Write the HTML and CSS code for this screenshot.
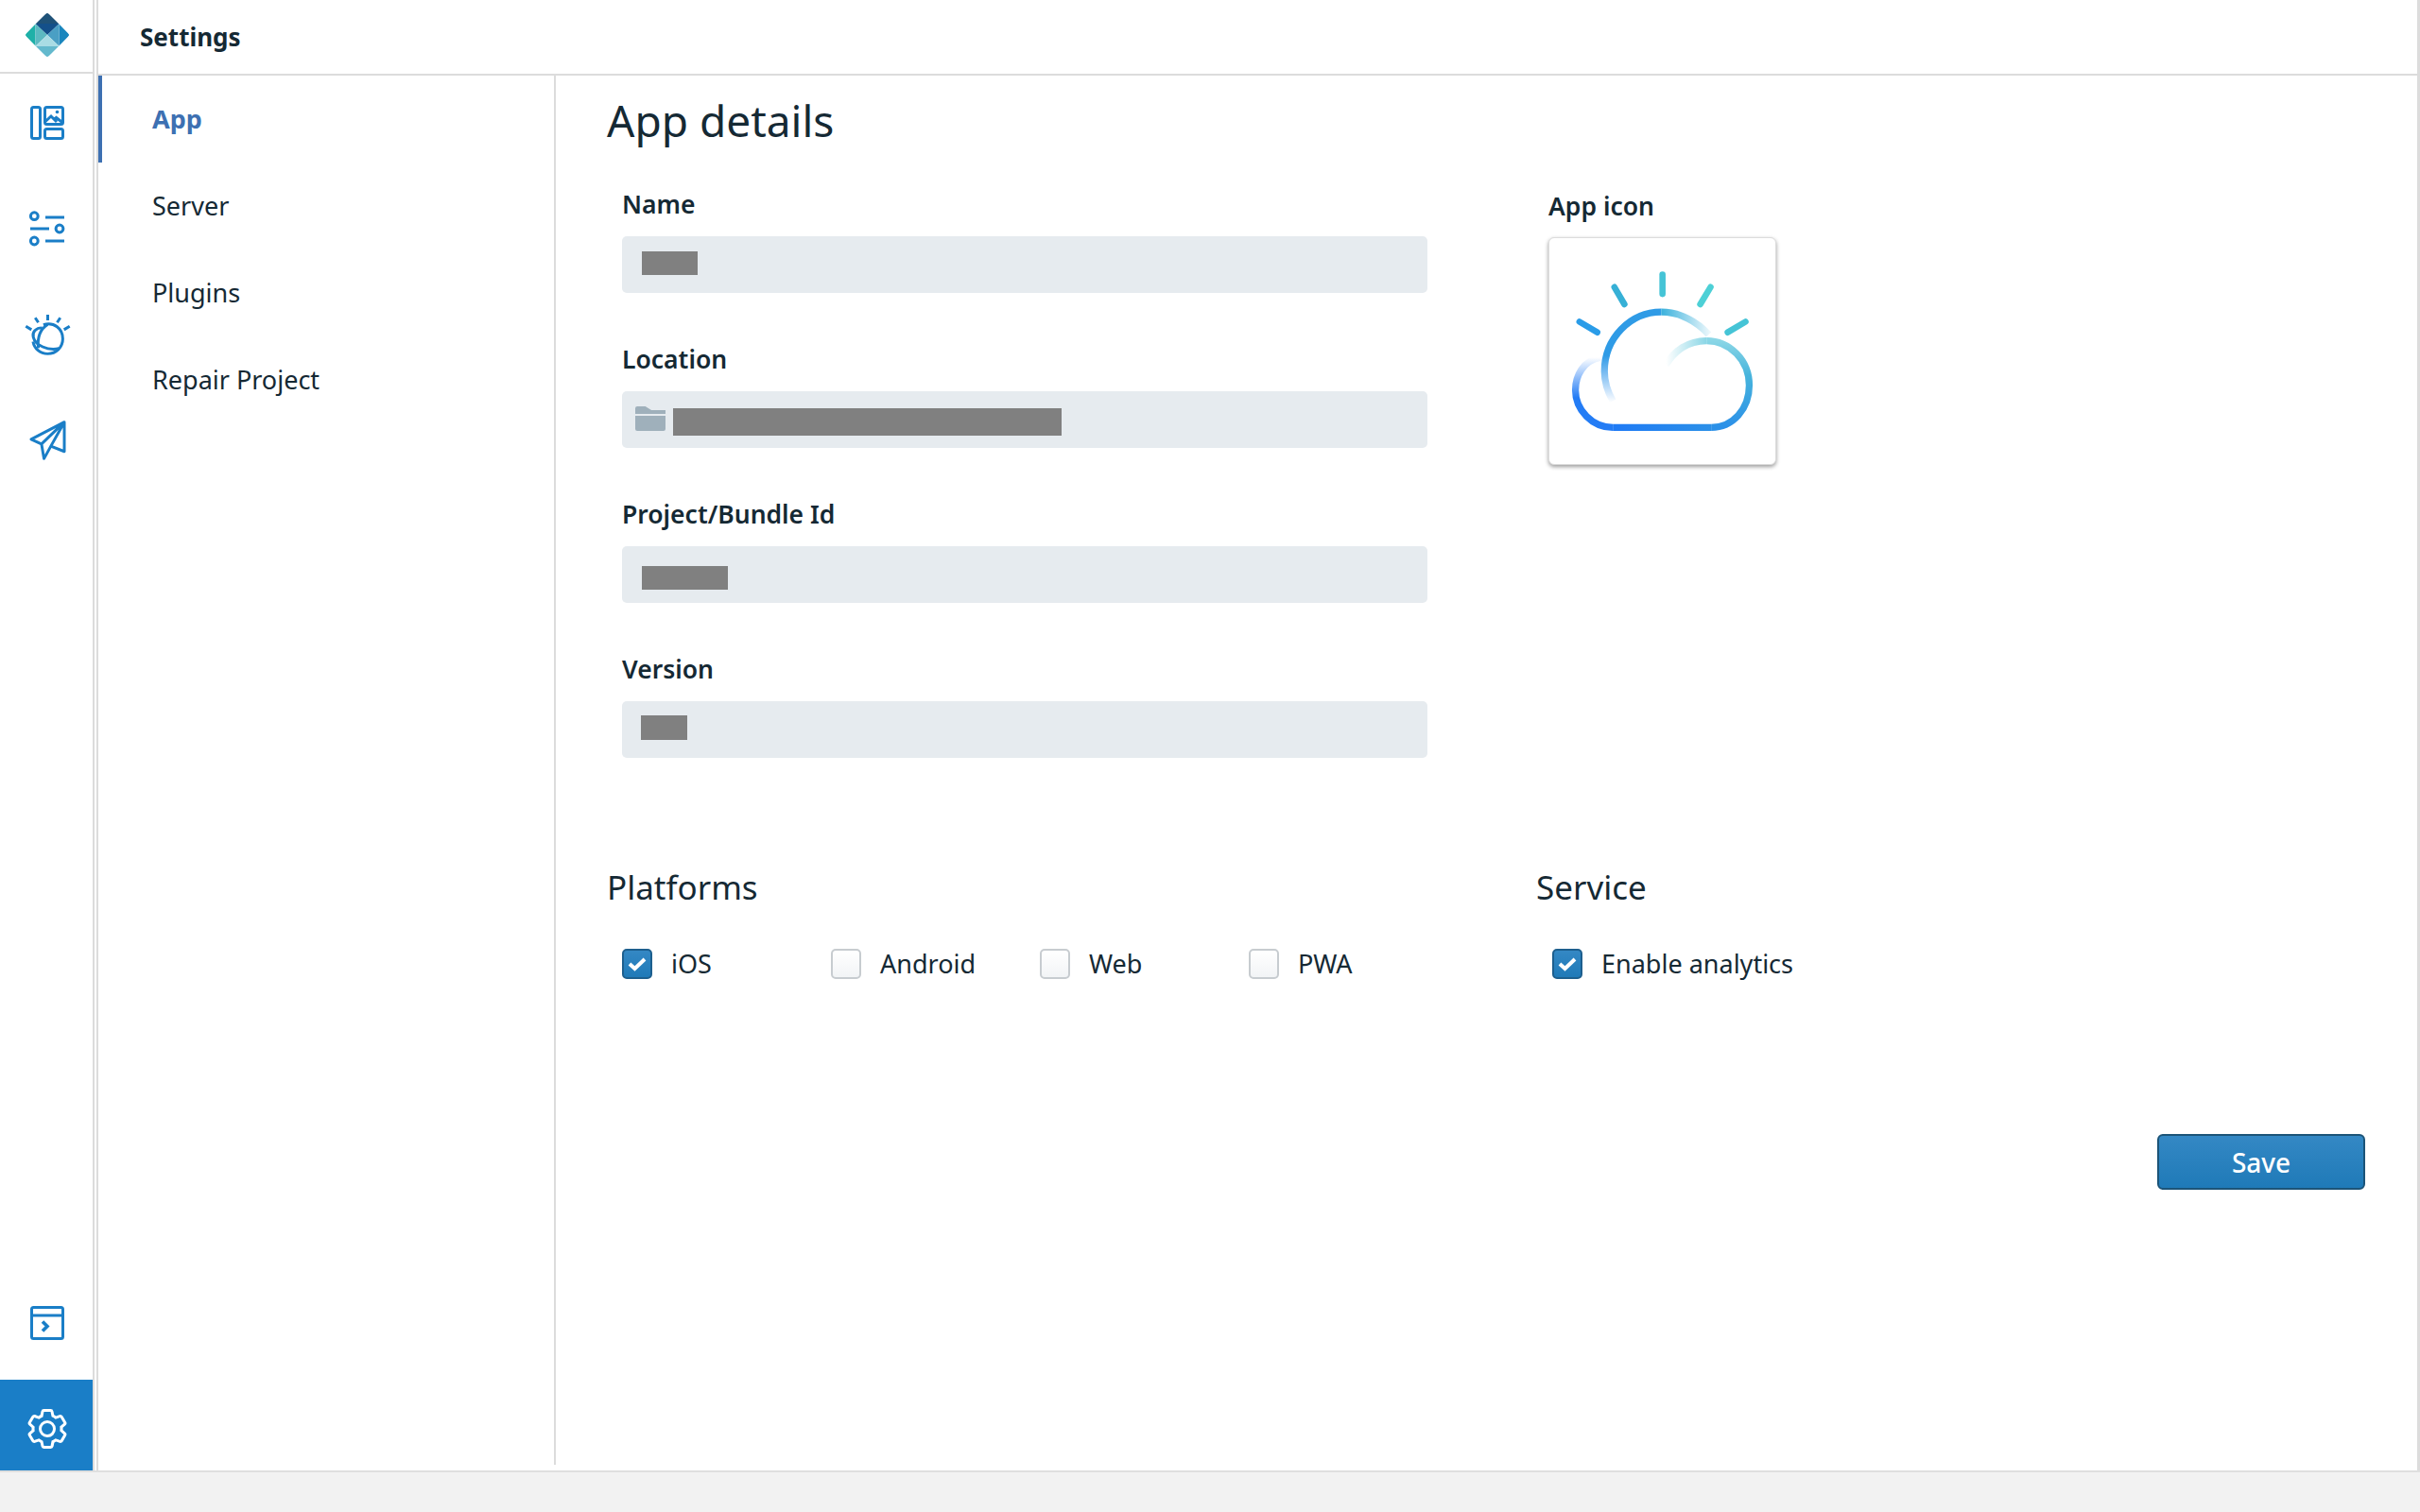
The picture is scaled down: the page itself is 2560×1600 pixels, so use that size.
FILE: index.html
```html
<!DOCTYPE html>
<html lang="en">
<head>
    <meta charset="UTF-8">
    <meta name="viewport" content="width=device-width, initial-scale=1.0">
    <title>Settings</title>
    <link rel="stylesheet" href="styles.css">
</head>
<body>
    <div class="app">
        <!-- Icon rail -->
        <nav class="rail">
            <div class="rail-logo">
                <svg class="logo" viewBox="0 0 48 48" width="48" height="48">
                    <defs>
                        <clipPath id="logoClip"><rect x="7" y="7" width="34" height="34" rx="3" transform="rotate(45 24 24)" /></clipPath>
                    </defs>
                    <g clip-path="url(#logoClip)">
                        <path d="M24 0L36.7 12H11.3z" fill="#1f5278" />
                        <path d="M11.3 12H36.7L24 24z" fill="#14508a" />
                        <path d="M11.3 12L0 24L11.3 36z" fill="#1fb0a8" />
                        <path d="M11.3 12L24 24L11.3 36z" fill="#5cb9c1" />
                        <path d="M36.7 12L48 24L36.7 36z" fill="#1a86bd" />
                        <path d="M36.7 12L24 24L36.7 36z" fill="#4a9fc4" />
                        <path d="M11.3 36H36.7L24 24z" fill="#a9dce4" />
                        <path d="M11.3 36H36.7L24 48z" fill="#64b9cd" />
                    </g>
                </svg>
            </div>
            <div class="rail-group">
                <a class="rail-item">
                    <svg class="icon" viewBox="0 0 40 40" width="40" height="40">
                        <rect x="3.5" y="3.5" width="9" height="33" rx="2" />
                        <rect x="17.5" y="3.5" width="19" height="18" rx="2" />
                        <rect x="17.5" y="26.5" width="19" height="10" rx="2" />
                        <path d="M17.5 19L24 13L30 19M27 16.5L29.5 14.5L36.5 20" />
                        <circle class="solid" cx="30.5" cy="8.5" r="1.8" />
                    </svg>
                </a>
                <a class="rail-item">
                    <svg class="icon" viewBox="0 0 40 40" width="40" height="40">
                        <circle cx="6.3" cy="6.7" r="3.9" />
                        <path d="M18 8H38M2 20H22" />
                        <circle cx="33" cy="20" r="3.9" />
                        <circle cx="6.3" cy="33" r="3.9" />
                        <path d="M18 33H38" />
                    </svg>
                </a>
                <a class="rail-item">
                    <svg class="icon" viewBox="70 83 160 160" width="53" height="53">
                        <path class="thick" d="M150 98V116M110 108L120 123M190 108L180 123M80 135L98 146M220 135L202 146" />
                        <path class="thick" d="M136 130C170 120 198 142 198 175C198 203 176 223 150 223C125 223 107 206 103 184" />
                        <path class="thick" d="M150 129C128 143 116 168 120 205M132 140C112 140 100 154 104 170C110 195 150 215 186 206" />
                    </svg>
                </a>
                <a class="rail-item">
                    <svg class="icon" viewBox="85 428 130 140" width="43" height="47">
                        <path class="thick" d="M203 438L97 493L130 508L138 555L160 515L203 532zM130 508L203 438M160 515L203 438" />
                    </svg>
                </a>
            </div>
            <div class="rail-group rail-bottom">
                <a class="rail-item">
                    <svg class="icon" viewBox="0 0 40 40" width="40" height="40">
                        <rect x="3.5" y="3.5" width="33" height="33" rx="2" />
                        <path d="M3.5 12H36.5" />
                        <path class="chevron" d="M15 18.5L20 23.5L15 28.5" />
                    </svg>
                </a>
                <a class="rail-item active">
                    <svg viewBox="0 0 32 32" width="48" height="48" fill="#fff">
                        <path d="M27 16.76v-1.53l1.92-1.68A2 2 0 0 0 29.3 11l-2.36-4a2 2 0 0 0-1.73-1 2 2 0 0 0-.64.1l-2.43.82a11.35 11.35 0 0 0-1.31-.75l-.51-2.52a2 2 0 0 0-2-1.61h-4.68a2 2 0 0 0-2 1.61l-.51 2.52a11.48 11.48 0 0 0-1.32.75l-2.38-.86A2 2 0 0 0 6.79 6a2 2 0 0 0-1.73 1L2.7 11a2 2 0 0 0 .41 2.51L5 15.24v1.53l-1.89 1.68A2 2 0 0 0 2.7 21l2.36 4a2 2 0 0 0 1.73 1 2 2 0 0 0 .64-.1l2.43-.82a11.35 11.35 0 0 0 1.31.75l.51 2.52a2 2 0 0 0 2 1.61h4.72a2 2 0 0 0 2-1.61l.51-2.52a11.48 11.48 0 0 0 1.32-.75l2.42.82a2 2 0 0 0 .64.1 2 2 0 0 0 1.73-1l2.28-4a2 2 0 0 0-.41-2.51zM25.21 24l-3.43-1.16a8.86 8.86 0 0 1-2.71 1.57L18.36 28h-4.72l-.71-3.55a9.36 9.36 0 0 1-2.7-1.57L6.79 24l-2.36-4 2.72-2.4a8.9 8.9 0 0 1 0-3.13L4.43 12l2.36-4 3.43 1.16a8.86 8.86 0 0 1 2.71-1.57L13.64 4h4.72l.71 3.55a9.36 9.36 0 0 1 2.7 1.57L25.21 8l2.36 4-2.72 2.4a8.9 8.9 0 0 1 0 3.13L27.57 20z" />
                        <path d="M16 22a6 6 0 1 1 6-6 5.94 5.94 0 0 1-6 6zm0-10a3.91 3.91 0 0 0-4 4 3.91 3.91 0 0 0 4 4 3.91 3.91 0 0 0 4-4 3.91 3.91 0 0 0-4-4z" />
                    </svg>
                </a>
            </div>
        </nav>

        <div class="panel">
            <header class="topbar">Settings</header>
            <div class="panel-body">
                <!-- Section list -->
                <ul class="sidenav">
                    <li class="sidenav-item selected">App</li>
                    <li class="sidenav-item">Server</li>
                    <li class="sidenav-item">Plugins</li>
                    <li class="sidenav-item">Repair Project</li>
                </ul>

                <main class="main">
                    <h1 class="page-title">App details</h1>
                    <div class="details">
                        <div class="fields">
                            <div class="field">
                                <label class="field-label">Name</label>
                                <div class="field-input"><span class="mask mask-name"></span></div>
                            </div>
                            <div class="field">
                                <label class="field-label">Location</label>
                                <div class="field-input has-icon">
                                    <svg class="folder" viewBox="0 0 30 26" width="32" height="26" preserveAspectRatio="none">
                                        <path d="M0 2a2 2 0 0 1 2-2h8l6 4h14v4H0zM0 10h30v14a2 2 0 0 1-2 2H2a2 2 0 0 1-2-2z" fill="#9fb0bb" />
                                    </svg>
                                    <span class="mask mask-location"></span>
                                </div>
                            </div>
                            <div class="field">
                                <label class="field-label">Project/Bundle Id</label>
                                <div class="field-input"><span class="mask mask-project"></span></div>
                            </div>
                            <div class="field">
                                <label class="field-label">Version</label>
                                <div class="field-input"><span class="mask mask-version"></span></div>
                            </div>
                        </div>
                        <div class="app-icon">
                            <div class="field-label">App icon</div>
                            <div class="icon-card">
                                <svg viewBox="52 183 723 724" width="239" height="239" fill="none" stroke-width="22" stroke-linecap="butt">
                                    <defs>
                                        <linearGradient id="cloudLeft" gradientUnits="userSpaceOnUse" x1="0" y1="565" x2="0" y2="750">
                                            <stop offset="0" stop-color="#237cf5" stop-opacity="0" />
                                            <stop offset="0.7" stop-color="#237cf5" />
                                        </linearGradient>
                                        <linearGradient id="cloudBottom" gradientUnits="userSpaceOnUse" x1="255" y1="0" x2="570" y2="0">
                                            <stop offset="0" stop-color="#1f7af5" />
                                            <stop offset="1" stop-color="#2b90e8" />
                                        </linearGradient>
                                        <linearGradient id="cloudRight" gradientUnits="userSpaceOnUse" x1="0" y1="790" x2="0" y2="512">
                                            <stop offset="0" stop-color="#2b90e8" />
                                            <stop offset="0.6" stop-color="#47b4dc" />
                                            <stop offset="1" stop-color="#8ad6e6" />
                                        </linearGradient>
                                        <linearGradient id="cloudInner" gradientUnits="userSpaceOnUse" x1="555" y1="0" x2="425" y2="0">
                                            <stop offset="0" stop-color="#8ad6e6" />
                                            <stop offset="1" stop-color="#8ad6e6" stop-opacity="0" />
                                        </linearGradient>
                                        <linearGradient id="bigLeft" gradientUnits="userSpaceOnUse" x1="0" y1="710" x2="0" y2="560">
                                            <stop offset="0" stop-color="#2f8ff0" stop-opacity="0" />
                                            <stop offset="1" stop-color="#2f9be6" />
                                        </linearGradient>
                                        <linearGradient id="bigTop" gradientUnits="userSpaceOnUse" x1="410" y1="0" x2="565" y2="0">
                                            <stop offset="0" stop-color="#3ab1dc" />
                                            <stop offset="1" stop-color="#3ab1dc" stop-opacity="0.1" />
                                        </linearGradient>
                                    </defs>
                                    <path d="M215 565C160 575 135 625 135 670C135 735 190 790 255 790" stroke="url(#cloudLeft)" />
                                    <path d="M255 790H570" stroke="url(#cloudBottom)" />
                                    <path d="M570 790C640 790 692 730 692 655C692 575 630 512 555 512" stroke="url(#cloudRight)" />
                                    <path d="M555 512C495 512 450 545 425 590" stroke="url(#cloudInner)" />
                                    <path d="M255 705C235 670 228 640 228 610C228 505 310 420 410 420" stroke="url(#bigLeft)" />
                                    <path d="M410 420C470 420 525 450 562 492" stroke="url(#bigTop)" />
                                    <g stroke-width="20" stroke-linecap="round">
                                        <path d="M414 300V362" stroke="#45c4d6" />
                                        <path d="M260 340L292 395" stroke="#36b0d6" />
                                        <path d="M568 340L535 395" stroke="#4dd0d6" />
                                        <path d="M148 451L205 485" stroke="#2a9ce8" />
                                        <path d="M680 451L623 485" stroke="#45c4d6" />
                                    </g>
                                </svg>
                            </div>
                        </div>
                    </div>

                    <div class="options">
                        <section class="option-group platforms">
                            <h2 class="group-title">Platforms</h2>
                            <div class="check-row">
                                <label class="check"><span class="box checked"><svg viewBox="0 0 20 16" width="20" height="16"><path d="M2 8L7.5 13L18 3" /></svg></span>iOS</label>
                                <label class="check"><span class="box"></span>Android</label>
                                <label class="check"><span class="box"></span>Web</label>
                                <label class="check"><span class="box"></span>PWA</label>
                            </div>
                        </section>
                        <section class="option-group">
                            <h2 class="group-title">Service</h2>
                            <div class="check-row single">
                                <label class="check"><span class="box checked"><svg viewBox="0 0 20 16" width="20" height="16"><path d="M2 8L7.5 13L18 3" /></svg></span>Enable analytics</label>
                            </div>
                        </section>
                    </div>

                    <div class="actions">
                        <button class="save-btn">Save</button>
                    </div>
                </main>
            </div>
        </div>
    </div>
</body>
</html>
```

FILE: styles.css
```css
* {
    box-sizing: border-box;
}
body {
    margin: 0;
    background-color: #f2f2f2;
    color: #152934;
    font-family: "Noto Sans", "Open Sans", sans-serif;
    font-size: 27px;
}
.app {
    display: flex;
    height: 1558px;
    background-color: #fff;
    border-bottom: 2px solid #dfdfdf;
}

/* Icon rail */
.rail {
    flex: none;
    display: flex;
    flex-direction: column;
    width: 100px;
    border-right: 2px solid #dcdcdc;
}
.rail-logo {
    display: flex;
    align-items: center;
    justify-content: center;
    height: 78px;
    padding: 0 0 2px 2px;
    border-bottom: 2px solid #dcdcdc;
}
.rail-group {
    display: flex;
    flex-direction: column;
    gap: 8px;
}
.rail-bottom {
    margin-top: auto;
}
.rail-item {
    display: flex;
    align-items: center;
    justify-content: center;
    height: 104px;
    padding-left: 2px;
}
.rail-item.active {
    height: 96px;
    padding-top: 8px;
    background-color: #1a7ec7;
}
.icon {
    fill: none;
    stroke: #1a7ec7;
    stroke-width: 3;
}
.icon .solid {
    fill: #1a7ec7;
    stroke: none;
}
.icon .thick {
    stroke-width: 9;
    stroke-linejoin: round;
}
.icon .chevron {
    stroke-width: 3.6;
}

.panel {
    flex: 1;
    min-width: 0;
    display: flex;
    flex-direction: column;
    margin-left: 2px;
    border-left: 2px solid #dcdcdc;
    border-right: 3px solid #dcdcdc;
}
.topbar {
    display: flex;
    align-items: center;
    height: 80px;
    padding-left: 44px;
    border-bottom: 2px solid #dcdcdc;
    font-weight: 700;
    font-size: 26px;
}
.panel-body {
    flex: 1;
    display: flex;
}

/* Section list */
.sidenav {
    flex: none;
    width: 484px;
    height: 1470px;
    margin: 0;
    padding: 0;
    list-style: none;
    border-right: 2px solid #dcdcdc;
}
.sidenav-item {
    display: flex;
    align-items: center;
    height: 92px;
    padding: 0 0 2px 57px;
}
.sidenav-item.selected {
    padding-left: 53px;
    border-left: 4px solid #3d70b2;
    color: #3d70b2;
    font-weight: 700;
}

.main {
    flex: 1;
    min-width: 0;
    padding: 15px 55px 0 54px;
}
.page-title {
    margin: 0 0 39px;
    font-size: 46px;
    font-weight: 400;
    line-height: 64px;
}
.details {
    display: flex;
}
.fields {
    width: 852px;
    margin-left: 16px;
}
.field {
    margin-bottom: 52px;
}
.field-label {
    display: block;
    margin-bottom: 16px;
    font-size: 26.5px;
    font-weight: 600;
    line-height: 36px;
}
.field-input {
    display: flex;
    align-items: center;
    height: 60px;
    padding-left: 20px;
    background-color: #e6ebef;
    border-radius: 5px;
}
.field-input.has-icon {
    padding-left: 14px;
    gap: 8px;
}
.folder {
    margin-top: -2px;
}
.mask {
    background-color: #808080;
}
.mask-name {
    width: 59px;
    height: 25px;
    margin: -3px 0 0 1px;
}
.mask-location {
    width: 411px;
    height: 29px;
    margin-top: 5px;
}
.mask-project {
    width: 91px;
    height: 25px;
    margin: 7px 0 0 1px;
}
.mask-version {
    width: 49px;
    height: 26px;
    margin-top: -4px;
}
.app-icon {
    margin-left: 128px;
}
.app-icon .field-label {
    margin-bottom: 15px;
    padding-top: 2px;
    height: 38px;
}
.icon-card {
    width: 241px;
    height: 241px;
    border: 1px solid #dcdcdc;
    border-radius: 6px;
    background-color: #fff;
    box-shadow: 0 2px 4px rgba(0, 0, 0, 0.4);
}

/* Platforms and service */
.options {
    display: flex;
    margin-top: 63px;
}
.option-group {
    flex: none;
}
.platforms {
    width: 983px;
}
.group-title {
    margin: 0 0 43px;
    font-size: 35px;
    font-weight: 400;
    line-height: 44px;
}
.check-row {
    display: grid;
    grid-template-columns: repeat(4, 221px);
    padding-left: 16px;
}
.check-row.single {
    display: block;
    padding-left: 17px;
}
.check {
    display: flex;
    align-items: center;
    gap: 20px;
    height: 32px;
    padding-bottom: 1px;
    white-space: nowrap;
}
.box {
    flex: none;
    display: flex;
    align-items: center;
    justify-content: center;
    width: 32px;
    height: 32px;
    margin-bottom: -1px;
    border: 2px solid #c7ccd0;
    border-radius: 5px;
    background-image: linear-gradient(#fff, #f2f4f6);
}
.box.checked {
    border-color: #1d5f8e;
    background-image: linear-gradient(#3488c4, #1f7ab8);
}
.box svg {
    fill: none;
    stroke: #fff;
    stroke-width: 4;
}
.actions {
    display: flex;
    justify-content: flex-end;
    margin-top: 164px;
}
.save-btn {
    width: 220px;
    height: 59px;
    border: 2px solid #1c5478;
    border-radius: 6px;
    background-image: linear-gradient(#3488c4, #1f7ab8);
    color: #fff;
    font-family: inherit;
    font-size: 28px;
    font-weight: 500;
}
```
